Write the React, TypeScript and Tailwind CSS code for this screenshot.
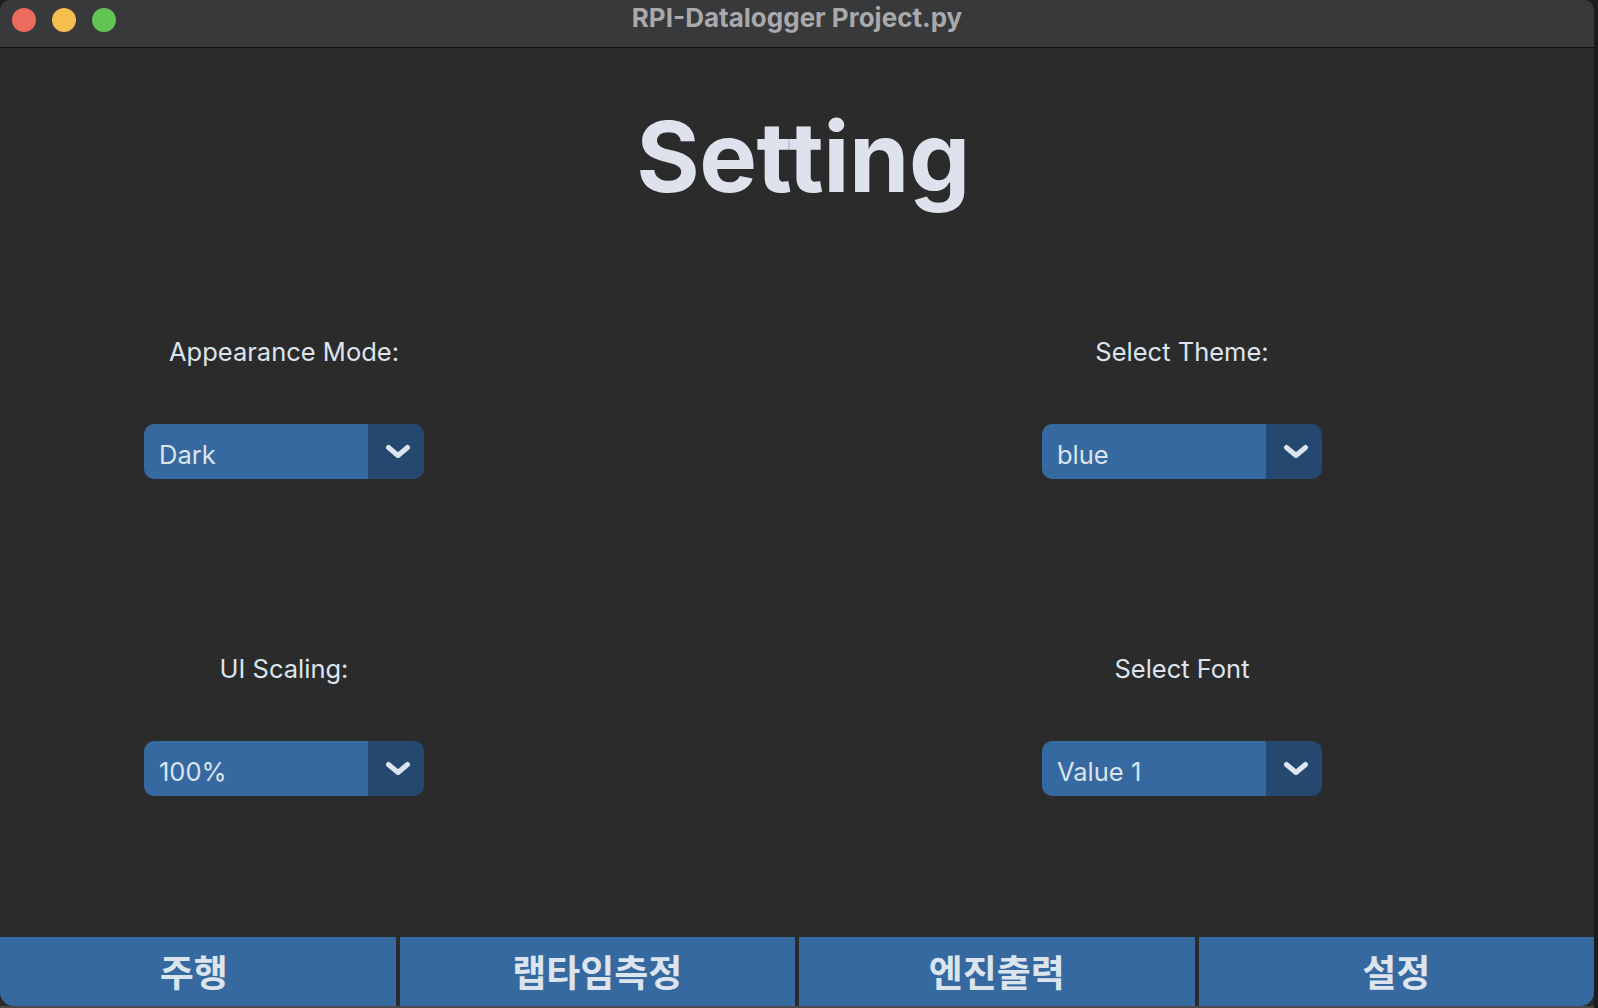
import React from 'react';

const FIELDS = [
  [
    { label: 'Appearance Mode:', value: 'Dark' },
    { label: 'Select Theme:', value: 'blue' },
  ],
  [
    { label: 'UI Scaling:', value: '100%' },
    { label: 'Select Font', value: 'Value 1' },
  ],
];

const TABS = ['주행', '랩타임측정', '엔진출력', '설정'];

const Chevron = () => (
  <svg width="26" height="16" viewBox="0 0 26 16" className="ml-[3px]">
    <polyline
      points="3.5,3.5 13,11.5 22.5,3.5"
      fill="none"
      stroke="#dce4ee"
      strokeWidth="5"
      strokeLinecap="round"
      strokeLinejoin="round"
    />
  </svg>
);

const OptionMenu = ({ value }: { value: string }) => (
  <div className="flex h-[55px] w-[280px] overflow-hidden rounded-[10px]">
    <div className="flex flex-1 items-center bg-[#36699f] pl-[15px] pt-[6px] text-[25.5px] leading-[32px] text-[#dce4ee]">
      {value}
    </div>
    <div className="flex w-[56px] items-center justify-center bg-[#24486f]">
      <Chevron />
    </div>
  </div>
);

const Field = ({ label, value }: { label: string; value: string }) => (
  <div className="flex w-[280px] flex-col items-center">
    <div className="text-[25.5px] leading-[32px] text-[#dce4ee]">{label}</div>
    <div className="mt-[56px]">
      <OptionMenu value={value} />
    </div>
  </div>
);

export default function App() {
  return (
    <div
      className="h-[1008px] w-[1598px] overflow-hidden bg-[#1c1c1c]"
      style={{ fontFamily: 'Inter, "Noto Sans CJK KR", sans-serif' }}
    >
      <div className="flex h-[1006px] w-[1594px] flex-col overflow-hidden rounded-t-[10px] bg-[#2b2b2b]">
        {/* title bar */}
        <div className="relative flex h-[48px] shrink-0 items-center justify-center border-b border-[#0e0e0e] bg-[#38393b]">
          <div className="absolute left-[12px] top-[8px] flex gap-[16px]">
            <span className="h-[24px] w-[24px] rounded-full bg-[#ed6a5e]" />
            <span className="h-[24px] w-[24px] rounded-full bg-[#f5bf4f]" />
            <span className="h-[24px] w-[24px] rounded-full bg-[#61c554]" />
          </div>
          <div className="pb-[11px] text-[26px] font-bold leading-[32px] text-[#a9a9ab]">RPI-Datalogger Project.py</div>
        </div>

        {/* content */}
        <div className="flex flex-1 flex-col">
          <div className="mt-[60px] pl-[12px] text-center text-[97px] font-bold leading-[97px] tracking-[-0.5px] text-[#dde2ec]">
            Setting
          </div>
          <div className="mt-[131px] flex flex-col gap-[174px]">
            {FIELDS.map((row, i) => (
              <div key={i} className="flex gap-[618px] pl-[144px]">
                {row.map((f) => (
                  <Field key={f.label} {...f} />
                ))}
              </div>
            ))}
          </div>
        </div>

        {/* tab bar */}
        <div className="grid h-[69px] shrink-0 grid-cols-4 gap-[4px]">
          {TABS.map((t, i) => (
            <div
              key={t}
              className={`flex items-center justify-center bg-[#36699f] text-[37px] font-bold text-[#dce4ee] ${
                i === 0 ? 'rounded-bl-[14px] pr-[8px]' : ''
              } ${i === TABS.length - 1 ? 'rounded-br-[14px]' : ''}`}
              style={{ fontFamily: '"Noto Sans CJK KR", sans-serif' }}
            >
              {t}
            </div>
          ))}
        </div>
      </div>
      <div className="h-[2px] w-[1594px] bg-[#4a4a4a]" />
    </div>
  );
}
